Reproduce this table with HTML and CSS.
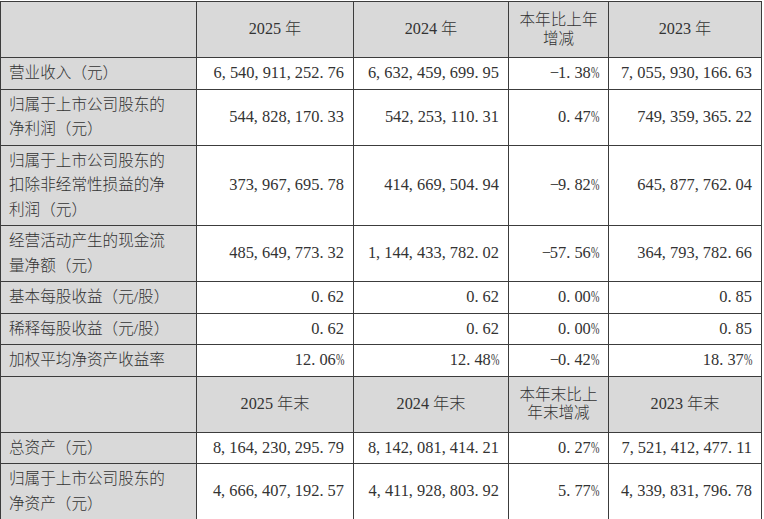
FILE: index.html
```html
<!DOCTYPE html>
<html lang="zh">
<head>
<meta charset="utf-8">
<link rel="stylesheet" href="styles.css">
</head>
<body>
<table class="fin">
  <colgroup>
    <col class="c-label"><col class="c-a"><col class="c-b"><col class="c-c"><col class="c-d">
  </colgroup>
  <tr class="head">
    <td class="label"></td>
    <td>2025 年</td>
    <td>2024 年</td>
    <td class="tight">本年比上年<br>增减</td>
    <td>2023 年</td>
  </tr>
  <tr>
    <td class="label">营业收入（元）</td>
    <td class="num">6<span class="s">,</span>540<span class="s">,</span>911<span class="s">,</span>252<span class="s">.</span>76</td>
    <td class="num">6<span class="s">,</span>632<span class="s">,</span>459<span class="s">,</span>699<span class="s">.</span>95</td>
    <td class="num pct-cell"><span class="s">−</span>1<span class="s">.</span>38<span class="pc">%</span></td>
    <td class="num">7<span class="s">,</span>055<span class="s">,</span>930<span class="s">,</span>166<span class="s">.</span>63</td>
  </tr>
  <tr>
    <td class="label">归属于上市公司股东的<br>净利润（元）</td>
    <td class="num">544<span class="s">,</span>828<span class="s">,</span>170<span class="s">.</span>33</td>
    <td class="num">542<span class="s">,</span>253<span class="s">,</span>110<span class="s">.</span>31</td>
    <td class="num pct-cell">0<span class="s">.</span>47<span class="pc">%</span></td>
    <td class="num">749<span class="s">,</span>359<span class="s">,</span>365<span class="s">.</span>22</td>
  </tr>
  <tr>
    <td class="label">归属于上市公司股东的<br>扣除非经常性损益的净<br>利润（元）</td>
    <td class="num">373<span class="s">,</span>967<span class="s">,</span>695<span class="s">.</span>78</td>
    <td class="num">414<span class="s">,</span>669<span class="s">,</span>504<span class="s">.</span>94</td>
    <td class="num pct-cell"><span class="s">−</span>9<span class="s">.</span>82<span class="pc">%</span></td>
    <td class="num">645<span class="s">,</span>877<span class="s">,</span>762<span class="s">.</span>04</td>
  </tr>
  <tr>
    <td class="label">经营活动产生的现金流<br>量净额（元）</td>
    <td class="num">485<span class="s">,</span>649<span class="s">,</span>773<span class="s">.</span>32</td>
    <td class="num">1<span class="s">,</span>144<span class="s">,</span>433<span class="s">,</span>782<span class="s">.</span>02</td>
    <td class="num pct-cell"><span class="s">−</span>57<span class="s">.</span>56<span class="pc">%</span></td>
    <td class="num">364<span class="s">,</span>793<span class="s">,</span>782<span class="s">.</span>66</td>
  </tr>
  <tr>
    <td class="label">基本每股收益（元/股）</td>
    <td class="num">0<span class="s">.</span>62</td>
    <td class="num">0<span class="s">.</span>62</td>
    <td class="num pct-cell">0<span class="s">.</span>00<span class="pc">%</span></td>
    <td class="num">0<span class="s">.</span>85</td>
  </tr>
  <tr>
    <td class="label">稀释每股收益（元/股）</td>
    <td class="num">0<span class="s">.</span>62</td>
    <td class="num">0<span class="s">.</span>62</td>
    <td class="num pct-cell">0<span class="s">.</span>00<span class="pc">%</span></td>
    <td class="num">0<span class="s">.</span>85</td>
  </tr>
  <tr>
    <td class="label">加权平均净资产收益率</td>
    <td class="num pct-cell">12<span class="s">.</span>06<span class="pc">%</span></td>
    <td class="num pct-cell">12<span class="s">.</span>48<span class="pc">%</span></td>
    <td class="num pct-cell"><span class="s">−</span>0<span class="s">.</span>42<span class="pc">%</span></td>
    <td class="num pct-cell">18<span class="s">.</span>37<span class="pc">%</span></td>
  </tr>
  <tr class="head">
    <td class="label"></td>
    <td>2025 年末</td>
    <td>2024 年末</td>
    <td class="tight">本年末比上<br>年末增减</td>
    <td>2023 年末</td>
  </tr>
  <tr>
    <td class="label">总资产（元）</td>
    <td class="num">8<span class="s">,</span>164<span class="s">,</span>230<span class="s">,</span>295<span class="s">.</span>79</td>
    <td class="num">8<span class="s">,</span>142<span class="s">,</span>081<span class="s">,</span>414<span class="s">.</span>21</td>
    <td class="num pct-cell">0<span class="s">.</span>27<span class="pc">%</span></td>
    <td class="num">7<span class="s">,</span>521<span class="s">,</span>412<span class="s">,</span>477<span class="s">.</span>11</td>
  </tr>
  <tr>
    <td class="label">归属于上市公司股东的<br>净资产（元）</td>
    <td class="num">4<span class="s">,</span>666<span class="s">,</span>407<span class="s">,</span>192<span class="s">.</span>57</td>
    <td class="num">4<span class="s">,</span>411<span class="s">,</span>928<span class="s">,</span>803<span class="s">.</span>92</td>
    <td class="num pct-cell">5<span class="s">.</span>77<span class="pc">%</span></td>
    <td class="num">4<span class="s">,</span>339<span class="s">,</span>831<span class="s">,</span>796<span class="s">.</span>78</td>
  </tr>
</table>
</body>
</html>
```

FILE: styles.css
```css
html, body {
  margin: 0;
  padding: 0;
  background: #ffffff;
}

.fin {
  border-collapse: collapse;
  table-layout: fixed;
  width: 761px;
  margin-top: 1px;
  font-family: "Liberation Serif", "Noto Sans CJK SC", serif;
  font-weight: 300;
  color: #333333;
  font-size: 15.6px;
  line-height: 24.5px;
}

.c-label { width: 196px; }
.c-a { width: 157px; }
.c-b { width: 155px; }
.c-c { width: 100px; }
.c-d { width: 153px; }

.fin td {
  border: 1px solid #3c3c3c;
  padding: 3px 9px 3px 8px;
  vertical-align: middle;
  white-space: nowrap;
}

.fin td.label {
  background: #d9d9d9;
  text-align: left;
}

.head td {
  background: #d9d9d9;
  text-align: center;
  height: 49px;
  padding: 3px 4px;
  font-size: 16.2px;
}

.head td.tight {
  line-height: 18.5px;
  font-size: 15.6px;
}

.fin td.num {
  text-align: right;
  font-size: 16.4px;
  padding-right: 9px;
}

.s {
  display: inline-block;
  width: 0.5em;
  text-align: left;
}

.pc {
  display: inline-block;
  width: 0.5em;
  transform: scaleX(0.62);
  transform-origin: left center;
  text-align: left;
}
```
